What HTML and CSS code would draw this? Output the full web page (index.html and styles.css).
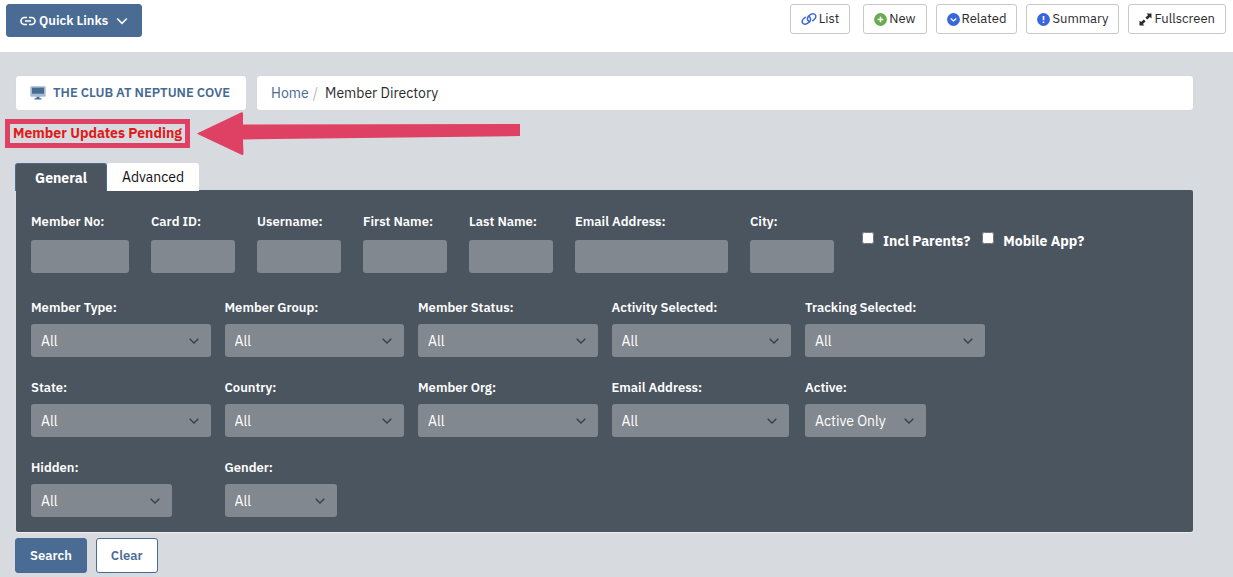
FILE: index.html
```html
<!DOCTYPE html>
<html lang="en">
<head>
<meta charset="utf-8">
<meta name="viewport" content="width=device-width, initial-scale=1">
<title>Member Directory</title>
<link rel="stylesheet" href="styles.css">
</head>
<body>
<header class="topbar">
  <button class="btn btn-primary quick" type="button">
    <svg width="16" height="16" viewBox="0 0 16 16" fill="none" stroke="currentColor" stroke-width="1.7"><path d="M7 4.500H4.500a3.500 3.500 0 0 0 0 7H7M9 4.500h2.500a3.500 3.500 0 0 1 0 7H9M5 8h6"/></svg>
    <span>Quick Links</span>
    <svg class="quick-caret" width="12" height="12" viewBox="0 0 12 12" fill="none" stroke="currentColor" stroke-width="1.600"><path d="M1.200 3.500 6 8.300l4.800-4.800"/></svg>
  </button>
  <nav class="tools">
    <button class="tool tool-list" type="button">
      <svg width="16" height="14" viewBox="0 0 16 14" fill="none" stroke="#3a66db" stroke-width="1.500" stroke-linecap="round"><path d="M8.800 9.800C6.300 9 5.600 6.200 7.300 4.400c1.500-1.700 3.800-3 5.600-2.500 2.200.6 2.500 2.900 1.100 4.700-.7.900-1.500 1.600-2.300 2.100"/><path d="M7.200 4.200c2.500.8 3.200 3.600 1.500 5.400-1.500 1.700-3.800 3-5.600 2.500C.9 11.500.6 9.200 2 7.400c.7-.9 1.500-1.600 2.300-2.100"/></svg>
      <span>List</span>
    </button>
    <button class="tool" type="button">
      <svg width="13" height="13" viewBox="0 0 13 13"><circle cx="6.500" cy="6.500" r="6.400" fill="#68ad4d"/><path d="M6.500 3.700v5.600M3.700 6.500h5.600" stroke="#fff" stroke-width="1.500"/></svg>
      <span>New</span>
    </button>
    <button class="tool" type="button">
      <svg width="13" height="13" viewBox="0 0 13 13"><circle cx="6.500" cy="6.500" r="6.400" fill="#3a66db"/><path d="M3.700 5.500 6.500 8l2.800-2.500" fill="none" stroke="#fff" stroke-width="1.300"/></svg>
      <span>Related</span>
    </button>
    <button class="tool" type="button">
      <svg width="13" height="13" viewBox="0 0 13 13"><circle cx="6.500" cy="6.500" r="6.400" fill="#3a66db"/><path d="M6.500 3v4.200M6.500 8.500v1.600" stroke="#fff" stroke-width="1.600"/></svg>
      <span>Summary</span>
    </button>
    <button class="tool" type="button">
      <svg width="13" height="13" viewBox="0 0 13 13"><path d="M7.500.5h5v5l-1.600-1.600-2.700 2.700-1.800-1.800 2.700-2.700zM5.500 12.500h-5v-5l1.600 1.600 2.700-2.700 1.800 1.800-2.700 2.700z" fill="#2b2b2b"/></svg>
      <span>Fullscreen</span>
    </button>
  </nav>
</header>

<main class="page">
  <div class="crumb-row">
    <a class="card club" href="#">
      <svg width="16" height="14" viewBox="0 0 16 14"><rect x=".3" y=".3" width="15.400" height="10.400" rx="1.200" fill="#a9bbd1"/><rect x="2" y="1.700" width="12" height="6" fill="#476a92"/><path d="M6.500 10.700h3v1.500h2v1.300h-7v-1.300h2z" fill="#476a92"/></svg>
      <span>THE CLUB AT NEPTUNE COVE</span>
    </a>
    <nav class="card crumbs" aria-label="Breadcrumb">
      <a class="crumb-link" href="#">Home</a><span class="slash">/</span><span>Member Directory</span>
    </nav>
  </div>

  <div class="notice">
    <a class="pending" href="#">Member Updates Pending</a>
    <svg class="arrow" width="324" height="44" viewBox="0 0 324 44"><path d="M.5 22Q0 21.500 1 21L44 .5q2-.8 2 1V12.500L323 12v12L46 27.500l.5 14q0 2-2 1.200z" fill="#de4163"/></svg>
  </div>

  <div class="tabs" role="tablist">
    <button class="tab tab-active" type="button" role="tab" aria-selected="true">General</button>
    <button class="tab" type="button" role="tab" aria-selected="false">Advanced</button>
  </div>

  <form class="search">
    <div class="panel">
      <div class="inputs">
        <div class="field field-no"><label for="no">Member No:</label><input class="control" id="no" type="text"></div>
        <div class="field"><label for="card">Card ID:</label><input class="control" id="card" type="text"></div>
        <div class="field"><label for="user">Username:</label><input class="control" id="user" type="text"></div>
        <div class="field"><label for="first">First Name:</label><input class="control" id="first" type="text"></div>
        <div class="field"><label for="last">Last Name:</label><input class="control" id="last" type="text"></div>
        <div class="field field-email"><label for="email">Email Address:</label><input class="control" id="email" type="text"></div>
        <div class="field"><label for="city">City:</label><input class="control" id="city" type="text"></div>
        <div class="checks">
          <div class="check"><input id="parents" type="checkbox"><label for="parents">Incl Parents?</label></div>
          <div class="check"><input id="app" type="checkbox"><label for="app">Mobile App?</label></div>
        </div>
      </div>
      <div class="selects">
        <div class="choice"><label for="type">Member Type:</label><select class="control" id="type"><option>All</option></select></div>
        <div class="choice"><label for="group">Member Group:</label><select class="control" id="group"><option>All</option></select></div>
        <div class="choice"><label for="status">Member Status:</label><select class="control" id="status"><option>All</option></select></div>
        <div class="choice"><label for="activity">Activity Selected:</label><select class="control" id="activity"><option>All</option></select></div>
        <div class="choice"><label for="tracking">Tracking Selected:</label><select class="control" id="tracking"><option>All</option></select></div>
      </div>
      <div class="selects">
        <div class="choice"><label for="state">State:</label><select class="control" id="state"><option>All</option></select></div>
        <div class="choice"><label for="country">Country:</label><select class="control" id="country"><option>All</option></select></div>
        <div class="choice"><label for="org">Member Org:</label><select class="control" id="org"><option>All</option></select></div>
        <div class="choice"><label for="hasemail">Email Address:</label><select class="control w-email" id="hasemail"><option>All</option></select></div>
        <div class="choice"><label for="active">Active:</label><select class="control w-active" id="active"><option>Active Only</option></select></div>
      </div>
      <div class="selects">
        <div class="choice"><label for="hidden">Hidden:</label><select class="control w-hidden" id="hidden"><option>All</option></select></div>
        <div class="choice"><label for="gender">Gender:</label><select class="control w-gender" id="gender"><option>All</option></select></div>
      </div>
    </div>
    <div class="actions">
      <button class="btn btn-primary" type="button">Search</button>
      <button class="btn btn-outline" type="reset">Clear</button>
    </div>
  </form>
</main>
</body>
</html>
```
FILE: styles.css
```css
* { box-sizing: border-box; }

body {
  margin: 0;
  background: #d7dadf;
  color: #2b2b2b;
  font: 14px/20px "IBM Plex Sans", Roboto, "Liberation Sans", sans-serif;
}

button, input, select { font: inherit; }
a { text-decoration: none; }
svg { flex: none; }

.topbar {
  display: flex;
  justify-content: space-between;
  align-items: flex-start;
  min-height: 52px;
  padding: 4px 7px 0 6px;
  background: #fff;
}

.btn {
  display: flex;
  align-items: center;
  justify-content: center;
  height: 35px;
  padding: 0 14px;
  border: 1px solid #486b93;
  border-radius: 3px;
  font-size: 13px;
  font-weight: 600;
}
.btn-primary { background: #4a6c94; color: #fff; }
.btn-outline { background: #fff; color: #4a6c94; }
.quick { height: 33px; padding: 0 13px; gap: 3px; }
.quick-caret { margin-left: 5px; }

.tools { display: flex; gap: 9px; }
.tool {
  display: flex;
  align-items: center;
  gap: 2px;
  height: 30px;
  padding: 0 10px;
  border: 1px solid #c8c8c8;
  border-radius: 3px;
  background: #fff;
  color: #2b2b2b;
  font-size: 13px;
}
.tool-list { margin-right: 4px; }

.page { padding: 24px 40px 4px 16px; }

.crumb-row { display: flex; gap: 11px; }
.card {
  display: flex;
  align-items: center;
  height: 34px;
  padding: 0 14px;
  border-radius: 3px;
  background: #fff;
  box-shadow: 0 0 1px #c9c9c9;
}
.club { gap: 7px; padding: 0 16px 0 14px; color: #476a92; font-size: 13px; font-weight: 600; }
.crumbs { flex: 1; }
.crumb-link { color: #476a92; }
.slash { margin: 0 7px 0 4px; color: #b5b9be; }

.notice {
  position: relative;
  display: flex;
  margin: 9px 0 15px -11px;
}
.pending {
  padding: 0 3px;
  border: 5px solid #de4163;
  color: #e01a1a;
  font-weight: 700;
  line-height: 19px;
}
.arrow { position: absolute; left: 192px; top: -7px; }

.tabs { display: flex; margin: 0 0 -1px -1px; position: relative; }
.tab {
  width: 92px;
  height: 28px;
  padding: 0;
  border: 0;
  border-radius: 3px 3px 0 0;
  background: #fff;
  color: #111;
}
.tab-active {
  border: 1px solid #486b93;
  border-bottom: 0;
  background: #4b555f;
  color: #fff;
  font-weight: 700;
}

.panel {
  padding: 22px 15px 15px;
  border-radius: 0 2px 2px 2px;
  background: #4b555f;
  box-shadow: 0 1px 1px #eef0f2;
  color: #fff;
}

.inputs { display: flex; gap: 22px; margin-bottom: 25px; }
.field, .choice { display: flex; flex-direction: column; font-size: 13px; font-weight: 600; }
.field { flex: 0 1 84px; min-width: 0; gap: 8px; white-space: nowrap; }
.field-no { flex-basis: 98px; }
.field-email { flex-basis: 153px; }

.checks { display: flex; gap: 12px; margin-left: 6px; padding-top: 19px; font-weight: 700; white-space: nowrap; }
.check { display: flex; align-items: flex-start; gap: 9px; }
.check input { width: 12px; height: 12px; margin: 1px 0 0; }

.selects {
  display: grid;
  grid-template-columns: repeat(6, 1fr);
  gap: 14px;
  margin-bottom: 21px;
}
.selects:last-child { margin-bottom: 0; }
.choice { gap: 6px; }

.control {
  width: 100%;
  height: 33px;
  padding: 0 10px;
  border: 0;
  border-radius: 3px;
  background-color: #82888f;
  color: #fff;
  font-size: 14px;
  font-weight: 400;
}
select.control {
  appearance: none;
  background-image: url("data:image/svg+xml,%3Csvg xmlns='http://www.w3.org/2000/svg' width='10' height='6' viewBox='0 0 10 6'%3E%3Cpath d='M.7.7 5 5 9.300.7' fill='none' stroke='%23383e45' stroke-width='1.300'/%3E%3C/svg%3E");
  background-repeat: no-repeat;
  background-position: right 12px center;
}
.w-email { width: 177px; }
.w-active { width: 121px; }
.w-hidden { width: 141px; }
.w-gender { width: 112px; }

.actions { display: flex; gap: 9px; margin: 6px 0 0 -1px; }
```
